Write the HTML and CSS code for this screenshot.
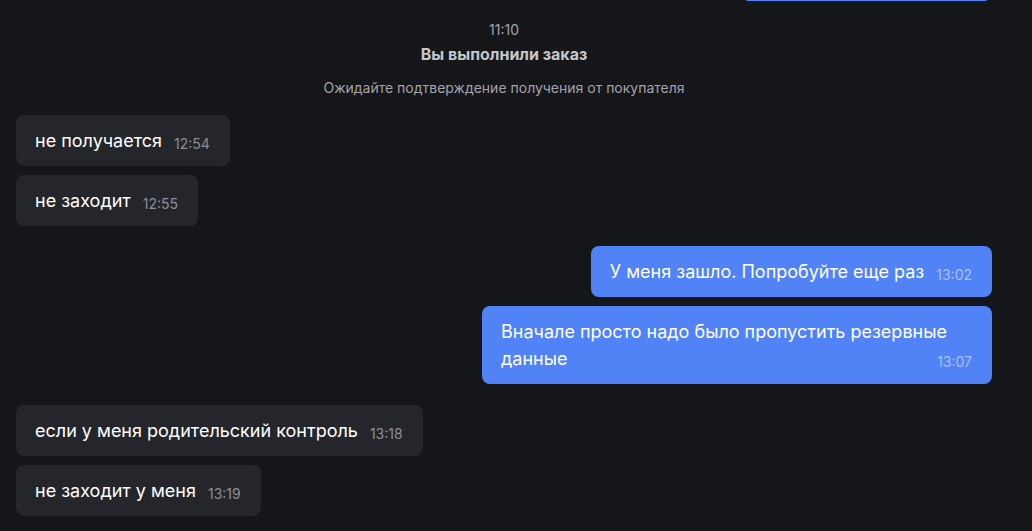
FILE: index.html
```html
<!DOCTYPE html>
<html lang="ru">
<head>
<meta charset="utf-8">
<link rel="stylesheet" href="styles.css">
</head>
<body>
<div class="chat">
  <div class="cut-row"><div class="cut-bubble"></div></div>

  <div class="system">
    <div class="sys-time">11:10</div>
    <div class="sys-title">Вы выполнили заказ</div>
    <div class="sys-note">Ожидайте подтверждение получения от покупателя</div>
  </div>

  <div class="group in">
    <div class="bubble"><span class="text">не получается</span><span class="time">12:54</span></div>
    <div class="bubble"><span class="text">не заходит</span><span class="time">12:55</span></div>
  </div>

  <div class="group out">
    <div class="bubble"><span class="text">У меня зашло. Попробуйте еще раз</span><span class="time">13:02</span></div>
    <div class="bubble"><span class="text">Вначале просто надо было пропустить резервные данные</span><span class="time">13:07</span></div>
  </div>

  <div class="group in">
    <div class="bubble"><span class="text">если у меня родительский контроль</span><span class="time">13:18</span></div>
    <div class="bubble"><span class="text">не заходит у меня</span><span class="time">13:19</span></div>
  </div>
</div>
</body>
</html>
```

FILE: styles.css
```css
html, body {
  margin: 0;
  padding: 0;
  background: #15161a;
  height: 100%;
  overflow: hidden;
}

body {
  font-family: Inter, "Noto Sans", sans-serif;
  color: #ffffff;
}

.chat {
  display: flex;
  flex-direction: column;
  padding: 0 40px 0 16px;
}

.cut-row {
  display: flex;
  justify-content: flex-end;
}

.cut-bubble {
  width: 251px;
  height: 40px;
  margin-top: -39px;
  background: #5183f6;
  border-radius: 8px;
}

.system {
  display: flex;
  flex-direction: column;
  align-items: center;
  padding-top: 19px;
}

.sys-time {
  font-size: 14px;
  line-height: 20px;
  color: #a3a4ab;
}

.sys-title {
  margin-top: 4px;
  font-size: 16px;
  font-weight: 700;
  line-height: 20px;
  color: #c6c7cc;
}

.sys-note {
  margin-top: 14px;
  font-size: 14px;
  line-height: 20px;
  color: #a3a4ab;
}

.group {
  display: flex;
  flex-direction: column;
  gap: 9px;
}

.group.in {
  align-items: flex-start;
}

.group.out {
  align-items: flex-end;
}

.system + .group {
  margin-top: 17px;
}

.group.in + .group.out {
  margin-top: 20px;
}

.group.out + .group.in {
  margin-top: 21px;
}

.bubble {
  border-radius: 8px;
  padding: 12px 20px 12px 19px;
  font-size: 18px;
  line-height: 27px;
  max-width: 471px;
}

.in .bubble {
  background: #25262c;
}

.out .bubble {
  background: #5183f6;
}

.time {
  float: right;
  position: relative;
  top: 3px;
  margin-left: 12px;
  font-size: 14px;
  line-height: 27px;
  color: #8d8e95;
}

.out .time {
  color: #a9c2fb;
}
```
